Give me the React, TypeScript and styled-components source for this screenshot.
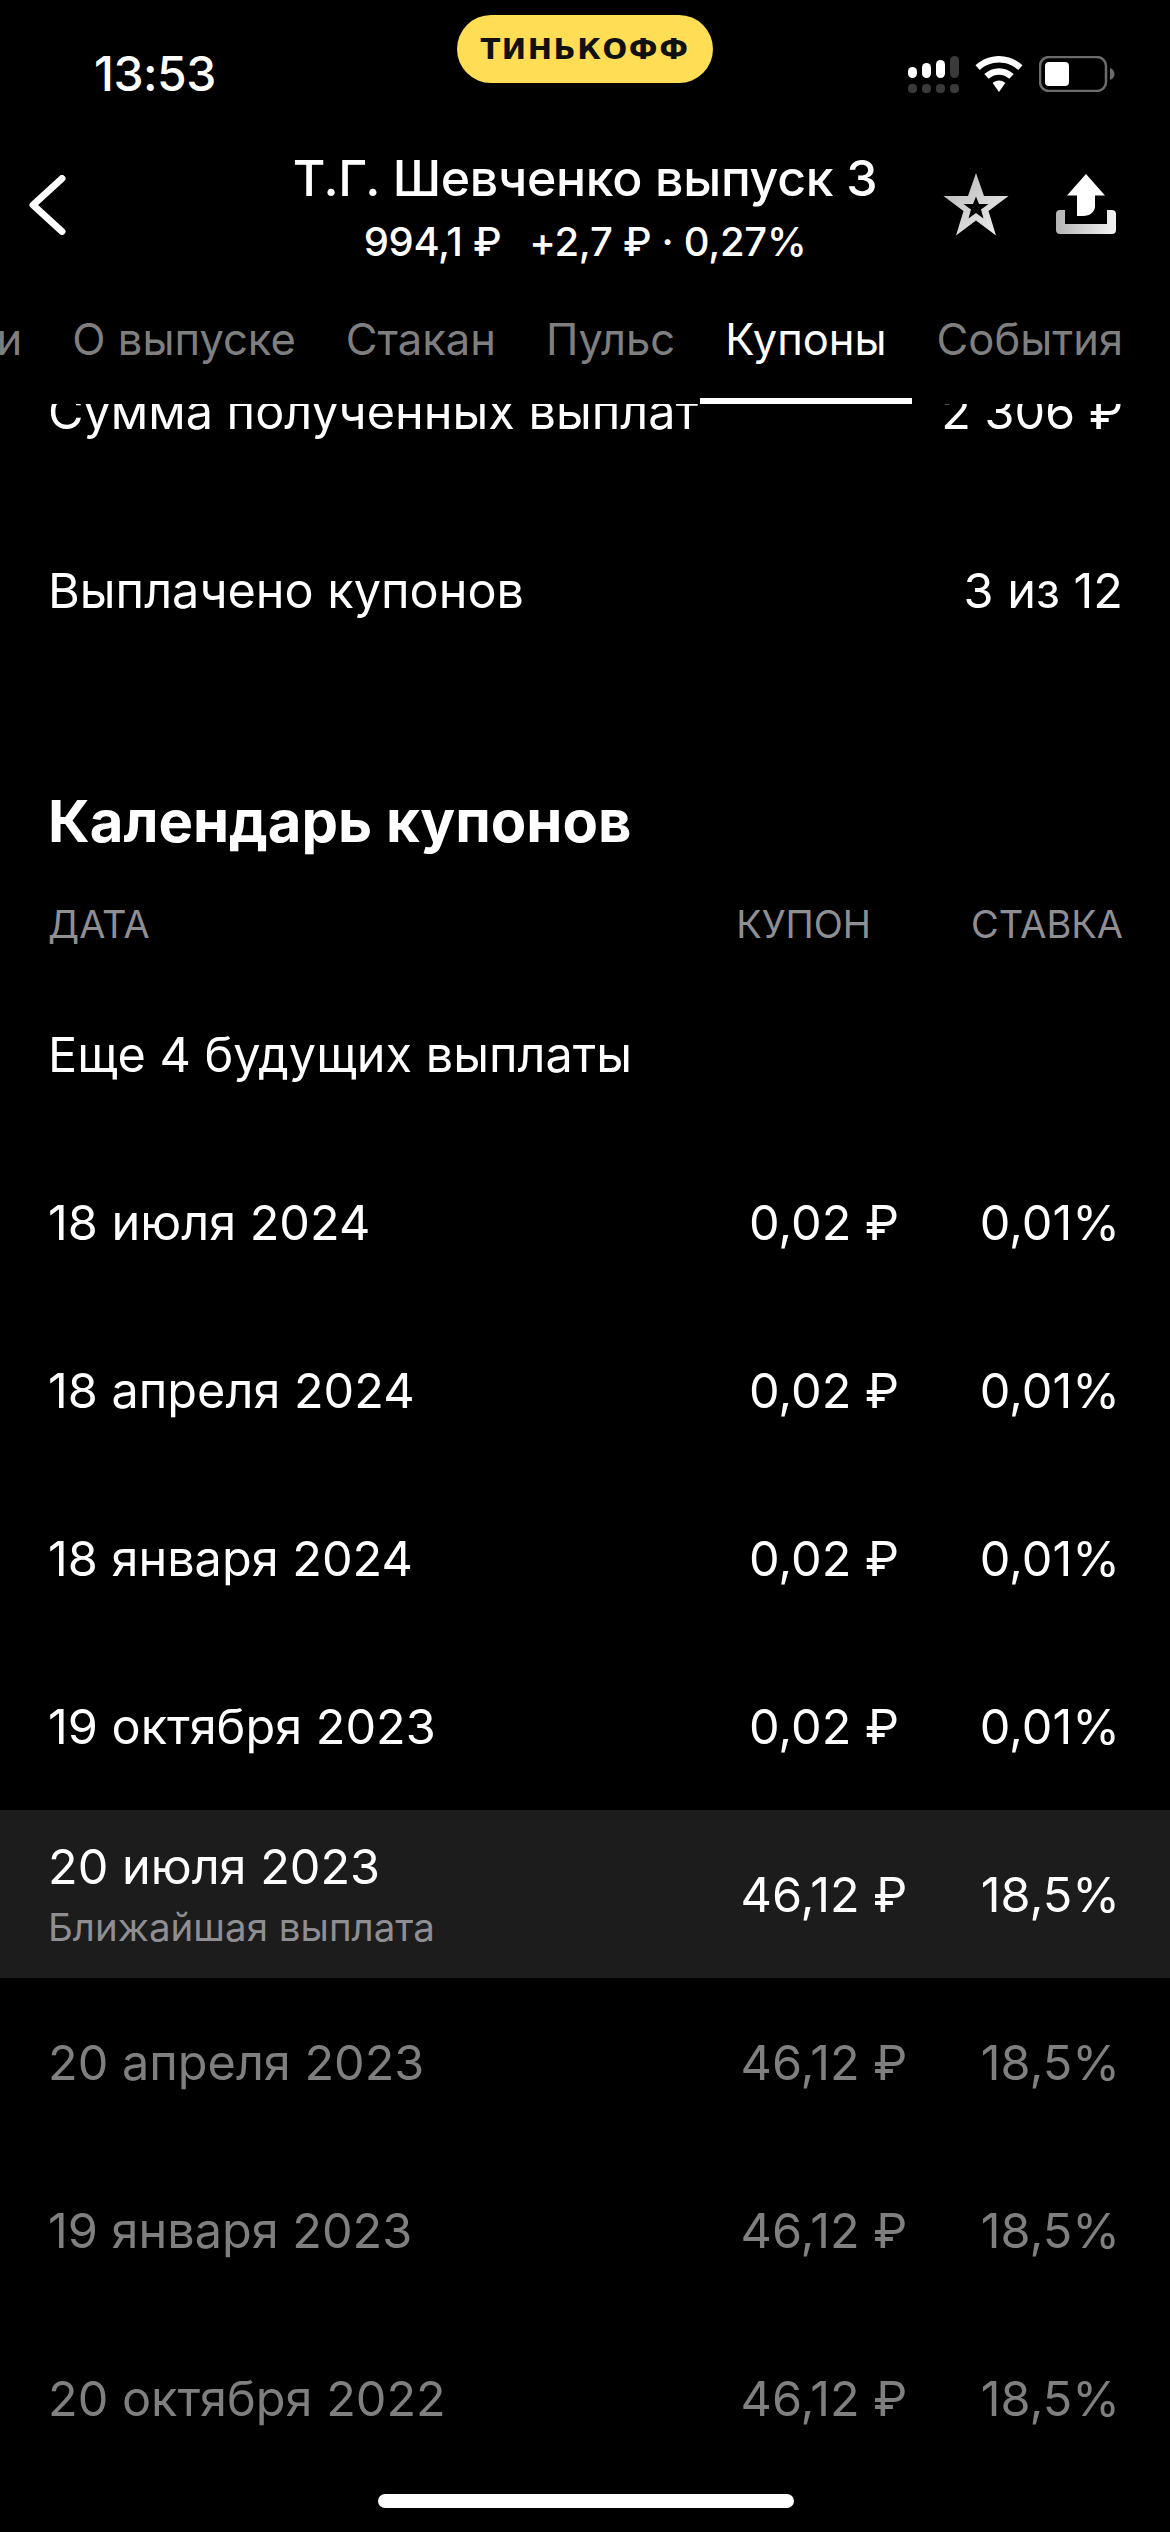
import { createGlobalStyle } from 'styled-components'
import styled from 'styled-components'

const GlobalStyle = createGlobalStyle`
  html, body {
    margin: 0;
    padding: 0;
    background: #000;
  }
`

const tabs = ['Новости', 'О выпуске', 'Стакан', 'Пульс', 'Купоны', 'События']

const upcoming = [
  { date: '18 июля 2024', coupon: '0,02 ₽', rate: '0,01%' },
  { date: '18 апреля 2024', coupon: '0,02 ₽', rate: '0,01%' },
  { date: '18 января 2024', coupon: '0,02 ₽', rate: '0,01%' },
  { date: '19 октября 2023', coupon: '0,02 ₽', rate: '0,01%' },
]

const paid = [
  { date: '20 апреля 2023', coupon: '46,12 ₽', rate: '18,5%' },
  { date: '19 января 2023', coupon: '46,12 ₽', rate: '18,5%' },
  { date: '20 октября 2022', coupon: '46,12 ₽', rate: '18,5%' },
]

const SignalIcon = () => (
  <svg width="52" height="38" viewBox="0 0 52 38">
    <rect x="1" y="11" width="9" height="11" rx="4.5" fill="#fff" />
    <rect x="15" y="7" width="9" height="15" rx="4.5" fill="#fff" />
    <rect x="29" y="4" width="9" height="18" rx="4.5" fill="#fff" />
    <rect x="43" y="0" width="9" height="22" rx="4.5" fill="#3a3a3a" />
    <rect x="1" y="28" width="9" height="9" rx="4" fill="#3a3a3a" />
    <rect x="15" y="28" width="9" height="9" rx="4" fill="#3a3a3a" />
    <rect x="29" y="28" width="9" height="9" rx="4" fill="#3a3a3a" />
    <rect x="43" y="28" width="9" height="9" rx="4" fill="#3a3a3a" />
  </svg>
)

const WifiIcon = () => (
  <svg width="48" height="36" viewBox="0 0 48 36">
    <path d="M24 0C15 0 6.800 3.500 0.500 9.300L4.800 13.900C9.800 9.200 16.600 6.400 24 6.400S38.200 9.200 43.200 13.900L47.500 9.300C41.200 3.500 33 0 24 0Z" fill="#fff" />
    <path d="M24 12.300C18.400 12.300 13.200 14.500 9.300 18.100L13.700 22.800C16.400 20.300 20 18.700 24 18.700S31.600 20.300 34.300 22.800L38.700 18.100C34.800 14.500 29.600 12.300 24 12.300Z" fill="#fff" />
    <path d="M24 24.500C21.500 24.500 19.300 25.500 17.700 27L24 36L30.300 27C28.700 25.500 26.500 24.500 24 24.500Z" fill="#fff" />
  </svg>
)

const BatteryIcon = () => (
  <svg width="76" height="36" viewBox="0 0 76 36">
    <rect x="1" y="1" width="66" height="34" rx="9" fill="none" stroke="#6b6b6b" strokeWidth="2.500" />
    <rect x="6" y="6" width="24" height="24" rx="4" fill="#fff" />
    <path d="M71 12C74 13 75.500 15.500 75.500 18S74 23 71 24Z" fill="#6b6b6b" />
  </svg>
)

const BackIcon = () => (
  <svg width="37" height="60" viewBox="0 0 37 60">
    <path d="M33 3.500L4 30L33 56.500" fill="none" stroke="#fff" strokeWidth="7" strokeLinecap="round" strokeLinejoin="round" />
  </svg>
)

const StarIcon = () => (
  <svg width="66" height="63" viewBox="0 0 66 63">
    <defs>
      <linearGradient id="starFill" x1="0" y1="0" x2="1" y2="1">
        <stop offset="0" stopColor="#b4b4b4" />
        <stop offset="1" stopColor="#f2f2f2" />
      </linearGradient>
    </defs>
    <path
      fillRule="evenodd"
      d="M33 0L41 23H65.500L45.500 38L53 62.500L33 47.500L13 62.500L20.500 38L0.500 23H25ZM33 23.500L30 31H20.500L28 36.500L25.500 45.500L33 40L40.500 45.500L38 36.500L45.500 31H36Z"
      fill="url(#starFill)"
    />
  </svg>
)

const ShareIcon = () => (
  <svg width="60" height="60" viewBox="0 0 60 60">
    <defs>
      <linearGradient id="trayFill" x1="0" y1="0" x2="1" y2="0">
        <stop offset="0" stopColor="#b4b4b4" />
        <stop offset="1" stopColor="#f4f4f4" />
      </linearGradient>
    </defs>
    <path d="M30 0L49 21.500H39V32C39 38 34 42 27 42H21V21.500H11Z" fill="#fff" />
    <path d="M0 40C0 37.500 1.500 36 4 36H9V50H51V36H56C58.500 36 60 37.500 60 40V56C60 58.500 58.500 60 56 60H4C1.500 60 0 58.500 0 56Z" fill="url(#trayFill)" />
  </svg>
)

const App = () => {
  return (
    <Page>
      <GlobalStyle />
      <StatusBar>
        <Time>13:53</Time>
        <BankPill>ТИНЬКОФФ</BankPill>
        <StatusIcons>
          <SignalIcon />
          <WifiIcon />
          <BatteryIcon />
        </StatusIcons>
      </StatusBar>
      <NavBar>
        <BackButton>
          <BackIcon />
        </BackButton>
        <TitleBlock>
          <Title>Т.Г. Шевченко выпуск 3</Title>
          <Subtitle>
            <span>994,1 ₽</span>
            <span>+2,7 ₽ · 0,27%</span>
          </Subtitle>
        </TitleBlock>
        <NavActions>
          <StarIcon />
          <ShareIcon />
        </NavActions>
      </NavBar>
      <TabBar>
        {tabs.map((tab) => (
          <Tab key={tab} $active={tab === 'Купоны'}>
            {tab}
          </Tab>
        ))}
      </TabBar>
      <ScrollArea>
        <ScrollContent>
          <SummaryRow>
            <span>Сумма полученных выплат</span>
            <span>2 306 ₽</span>
          </SummaryRow>
          <SummaryRow>
            <span>Выплачено купонов</span>
            <span>3 из 12</span>
          </SummaryRow>
          <SectionTitle>Календарь купонов</SectionTitle>
          <TableHead>
            <HeadDate>ДАТА</HeadDate>
            <span>КУПОН</span>
            <span>СТАВКА</span>
          </TableHead>
          <MoreRow>Еще 4 будущих выплаты</MoreRow>
          {upcoming.map((row) => (
            <CouponRow key={row.date}>
              <span>{row.date}</span>
              <CouponValue>{row.coupon}</CouponValue>
              <RateValue>{row.rate}</RateValue>
            </CouponRow>
          ))}
          <CouponRow $highlighted>
            <DateStack>
              <DateMain>20 июля 2023</DateMain>
              <DateHint>Ближайшая выплата</DateHint>
            </DateStack>
            <CouponValue>46,12 ₽</CouponValue>
            <RateValue>18,5%</RateValue>
          </CouponRow>
          {paid.map((row) => (
            <CouponRow key={row.date} $muted>
              <span>{row.date}</span>
              <CouponValue>{row.coupon}</CouponValue>
              <RateValue>{row.rate}</RateValue>
            </CouponRow>
          ))}
        </ScrollContent>
      </ScrollArea>
      <HomeIndicator />
    </Page>
  )
}

export default App

const Page = styled.div`
  position: relative;
  display: flex;
  flex-direction: column;
  width: 1170px;
  height: 2532px;
  overflow: hidden;
  background: #000;
  color: #fff;
  font-family: Inter, 'Noto Sans', sans-serif;
`

const StatusBar = styled.div`
  display: grid;
  grid-template-columns: 1fr auto 1fr;
  align-items: start;
  height: 133px;
  padding-top: 15px;
  box-sizing: border-box;
`

const Time = styled.div`
  margin: 34px 0 0 94px;
  font-size: 48px;
  line-height: 50px;
  font-weight: 500;
  letter-spacing: -0.5px;
`

const BankPill = styled.div`
  display: flex;
  align-items: center;
  justify-content: center;
  width: 256px;
  height: 68px;
  border-radius: 34px;
  background: #ffdd55;
  color: #111;
  font-family: 'DejaVu Sans', sans-serif;
  font-size: 29px;
  font-weight: 700;
  letter-spacing: 1.6px;
`

const StatusIcons = styled.div`
  display: flex;
  align-items: flex-start;
  justify-content: flex-end;
  gap: 16px;
  margin: 41px 55px 0 0;
`

const NavBar = styled.div`
  display: grid;
  grid-template-columns: 1fr auto 1fr;
  align-items: center;
  height: 140px;
`

const BackButton = styled.div`
  display: flex;
  padding: 4px 0 0 29px;
`

const TitleBlock = styled.div`
  display: flex;
  flex-direction: column;
  align-items: center;
  gap: 12px;
  padding-top: 8px;
`

const Title = styled.div`
  font-size: 50px;
  line-height: 58px;
  font-weight: 500;
  letter-spacing: -0.3px;
`

const Subtitle = styled.div`
  display: flex;
  gap: 28px;
  font-size: 40px;
  line-height: 46px;
  font-weight: 500;
  letter-spacing: -0.3px;
`

const NavActions = styled.div`
  display: flex;
  align-items: center;
  justify-content: flex-end;
  gap: 47px;
  padding: 2px 54px 0 0;
`

const TabBar = styled.div`
  display: flex;
  justify-content: flex-end;
  height: 131px;
  padding: 0 22px;
  overflow: hidden;
  box-sizing: border-box;
  background: #000;
`

const Tab = styled.div<{ $active?: boolean }>`
  flex: none;
  display: flex;
  align-items: center;
  height: 131px;
  padding: 6px 25px 0;
  box-sizing: border-box;
  border-bottom: 6px solid ${({ $active }) => ($active ? '#fff' : 'transparent')};
  color: ${({ $active }) => ($active ? '#fff' : '#7f7f7f')};
  font-size: 43.5px;
`

const ScrollArea = styled.div`
  flex: 1;
  min-height: 0;
  overflow: hidden;
`

const ScrollContent = styled.div`
  margin-top: -82px;
  font-size: 48.6px;
`

const SummaryRow = styled.div`
  display: flex;
  align-items: center;
  justify-content: space-between;
  height: 179px;
  padding: 0 47px 0 48px;
`

const SectionTitle = styled.div`
  margin-top: 106px;
  padding: 0 48px;
  font-size: 58px;
  line-height: 70px;
  font-weight: 700;
`

const TableHead = styled.div`
  display: flex;
  gap: 100px;
  margin-top: 43px;
  padding: 0 47px 0 48px;
  color: #8e8e93;
  font-size: 38px;
  line-height: 50px;
`

const HeadDate = styled.span`
  flex: 1;
`

const MoreRow = styled.div`
  display: flex;
  align-items: center;
  height: 168px;
  margin-top: 21px;
  padding: 0 48px;
`

const CouponRow = styled.div<{ $highlighted?: boolean; $muted?: boolean }>`
  display: grid;
  grid-template-columns: 1fr 220px 186px;
  align-items: center;
  height: 168px;
  padding: 0 50px 0 48px;
  background: ${({ $highlighted }) => ($highlighted ? '#1c1c1c' : 'transparent')};
  color: ${({ $muted }) => ($muted ? '#7f7f7f' : '#fff')};
`

const CouponValue = styled.span`
  text-align: center;
`

const RateValue = styled.span`
  text-align: right;
`

const DateStack = styled.div`
  display: flex;
  flex-direction: column;
  gap: 10px;
`

const DateMain = styled.span`
  line-height: 56px;
`

const DateHint = styled.span`
  color: #8e8e93;
  font-size: 38.5px;
  line-height: 44px;
`

const HomeIndicator = styled.div`
  position: absolute;
  left: 378px;
  bottom: 24px;
  width: 416px;
  height: 14px;
  border-radius: 7px;
  background: #fff;
`
